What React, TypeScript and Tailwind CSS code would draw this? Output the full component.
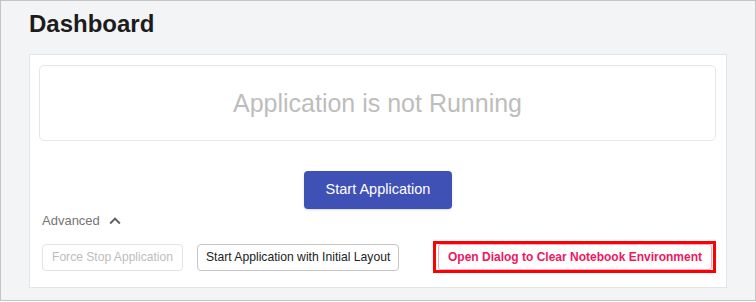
import React from 'react';

const ExpandLess: React.FC<{ className?: string }> = ({ className }) => (
  <svg viewBox="0 0 24 24" className={className} fill="currentColor" aria-hidden="true">
    <path d="M12 8l-6 6 1.41 1.41L12 10.83l4.59 4.58L18 14z" />
  </svg>
);

const App: React.FC = () => {
  return (
    <div className="w-[756px] h-[302px] bg-white font-['Liberation_Sans',Arial,sans-serif]">
      <div className="h-[301px] border border-[#c4c4c4] bg-[#f3f4f6] px-[28px] pt-[11px]">
        <h1 className="text-[24px] leading-[24px] font-bold text-[#1c1c1c]">Dashboard</h1>

        {/* Main card */}
        <div className="mt-[18px] bg-white border border-[#e3e4e6] pt-[10px] pb-[14px]">
          <div className="ml-[9px] mr-[10px] h-[76px] rounded-[5px] border border-[#e6e7e9] flex items-center justify-center">
            <span className="text-[25px] leading-[30px] text-[#bdbdbd]">Application is not Running</span>
          </div>

          <div className="mt-[30px] flex justify-center">
            <button className="w-[148px] h-[38px] rounded-[4px] bg-[#3f51b5] text-white text-[14.5px] shadow-[0_1px_2px_rgba(0,0,0,0.15)]">
              Start Application
            </button>
          </div>

          <div className="mt-[3px] pl-[12px] pr-[10px]">
            <div className="flex items-center h-[18px] text-[13px] text-[#757575]">
              <span>Advanced</span>
              <ExpandLess className="w-[22px] h-[22px] ml-[4px] text-[#5f5f5f]" />
            </div>

            <div className="mt-[11px] flex items-center justify-between h-[32px]">
              <div className="flex items-center gap-[14px]">
                <button className="h-[27px] px-[9px] rounded-[4px] border border-[#e3e3e3] text-[12.1px] text-[#bdbdbd]">
                  Force Stop Application
                </button>
                <button className="h-[27px] px-[8px] rounded-[4px] border border-[#c6c6c6] text-[12.15px] text-[#222222]">
                  Start Application with Initial Layout
                </button>
              </div>
              <div className="h-[32px] border-[3px] border-[#ff0000] pl-[2px] pr-[1px] flex items-center">
                <button className="h-[26px] px-[9px] rounded-[3px] border border-[#f7a8c4] bg-white text-[12px] font-bold text-[#f01760]">
                  Open Dialog to Clear Notebook Environment
                </button>
              </div>
            </div>
          </div>
        </div>
      </div>
    </div>
  );
};

export default App;
